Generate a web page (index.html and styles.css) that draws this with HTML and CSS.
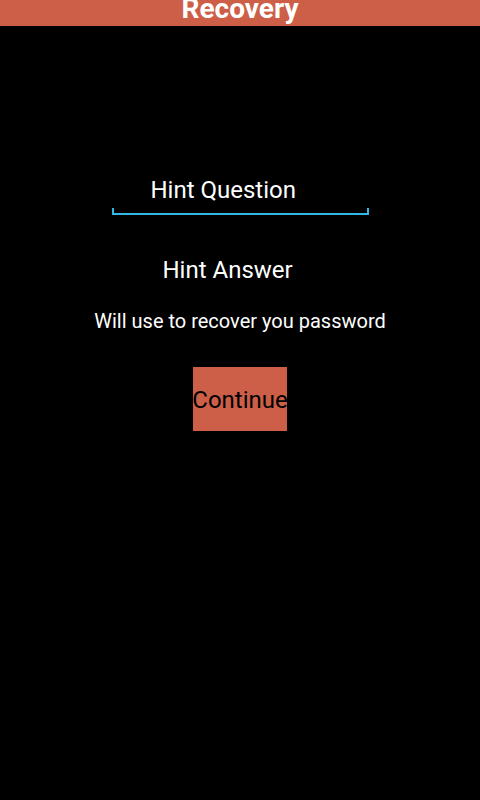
FILE: index.html
```html
<!DOCTYPE html>
<html lang="en">
<head>
  <meta charset="UTF-8" />
  <meta name="viewport" content="width=device-width, initial-scale=1.0" />
  <title>Recovery</title>
  <link rel="stylesheet" href="styles.css">
</head>
<body>
  <div class="header">Recovery</div>

  <div class="form">
    <div class="field">Hint Question</div>
    <div class="answer">Hint Answer</div>
    <p class="note">Will use to recover you password</p>
    <button class="continue-button">Continue</button>
  </div>
</body>
</html>
```

FILE: styles.css
```css
body {
  font-family: Roboto, 'Noto Sans', sans-serif;
  background: #000000;
  color: #ffffff;
  margin: 0;
  padding: 0;
}
.header {
  height: 26px;
  overflow: hidden;
  background: #cd5f48;
  color: #ffffff;
  text-align: center;
  font-size: 28px;
  font-weight: bold;
  line-height: 18px;
}
.form {
  display: flex;
  flex-direction: column;
  align-items: center;
  padding-top: 150px;
}
.field {
  position: relative;
  width: 257px;
  box-sizing: border-box;
  padding: 0 0 9px 39px;
  font-size: 24px;
  line-height: 28px;
  border-bottom: 2px solid #33b5e5;
}
.field::before,
.field::after {
  content: "";
  position: absolute;
  bottom: 0;
  width: 2px;
  height: 5px;
  background: #33b5e5;
}
.field::before {
  left: 0;
}
.field::after {
  right: 0;
}
.answer {
  width: 257px;
  box-sizing: border-box;
  padding-left: 51px;
  margin-top: 41px;
  font-size: 24px;
  line-height: 28px;
}
.note {
  margin: 25px 0 0 0;
  font-size: 20px;
  line-height: 24px;
  text-align: center;
}
.continue-button {
  margin-top: 34px;
  width: 94px;
  height: 64px;
  padding: 1px 0 0 0;
  border: none;
  background: #cd5f48;
  color: #000000;
  font-family: Roboto, 'Noto Sans', sans-serif;
  font-size: 24px;
  line-height: 28px;
  white-space: nowrap;
  display: flex;
  justify-content: center;
  align-items: center;
}
```
